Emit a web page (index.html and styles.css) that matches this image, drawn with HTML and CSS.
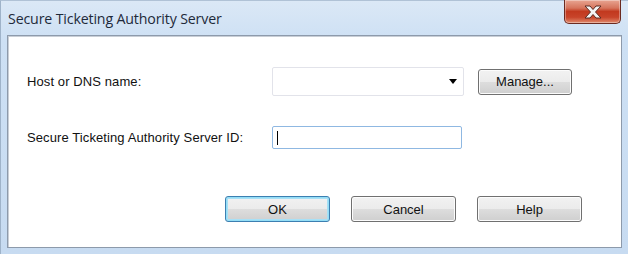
FILE: index.html
```html
<!DOCTYPE html>
<html>
<head>
<meta charset="utf-8">
<link rel="stylesheet" href="styles.css">
</head>
<body>
<div class="window">
  <div class="titlebar">
    <div class="title">Secure Ticketing Authority Server</div>
    <div class="close">
      <svg width="22" height="14" viewBox="0 0 22 14">
        <path d="M3 1 L8 1 L11 4.5 L14 1 L19 1 L13.5 7 L19 13 L14 13 L11 9.5 L8 13 L3 13 L8.5 7 Z" fill="#f4f4f4" stroke="#5a2a22" stroke-width="1" stroke-linejoin="round"/>
      </svg>
    </div>
  </div>
  <div class="panel">
    <div class="form">
      <div class="row row-host">
        <label class="label">Host or DNS name:</label>
        <div class="combo"><span class="arrow"></span></div>
        <button class="btn manage">Manage...</button>
      </div>
      <div class="row row-id">
        <label class="label">Secure Ticketing Authority Server ID:</label>
        <div class="textbox"><span class="caret"></span></div>
      </div>
    </div>
    <div class="actions">
      <button class="btn default">OK</button>
      <button class="btn">Cancel</button>
      <button class="btn">Help</button>
    </div>
  </div>
</div>
</body>
</html>
```
FILE: styles.css
```css
* { box-sizing: border-box; }
html, body { margin: 0; padding: 0; }
body { width: 628px; height: 254px; overflow: hidden; background: #cfe0f3; }

.window {
  width: 628px;
  height: 254px;
  background: linear-gradient(to bottom, #dbe8f6 0px, #cde0f4 40px, #c7dbf1 100%);
  border-left: 1px solid #9fb3c9;
  border-top: 1px solid #b0c2d6;
  display: flex;
  flex-direction: column;
}

.titlebar {
  height: 34px;
  display: flex;
  justify-content: space-between;
  align-items: flex-start;
  padding-left: 7px;
  padding-right: 7px;
}

.title {
  font-family: "Open Sans", "Noto Sans", sans-serif;
  font-size: 14.2px;
  color: #1e2a3a;
  margin-top: 8px;
  letter-spacing: -0.15px;
}

.close {
  width: 57px;
  height: 24px;
  margin-top: -1px;
  border: 1px solid #6b2a20;
  border-top: none;
  border-radius: 0 0 5px 5px;
  background: linear-gradient(to bottom, #e8a592 0%, #d6745c 35%, #c2391f 50%, #c8442a 75%, #e08a6c 100%);
  box-shadow: inset 0 0 0 1px rgba(255,255,255,0.35);
  display: flex;
  align-items: center;
  justify-content: center;
}

.panel {
  margin: 0 6px 6px 6px;
  flex: 1;
  background: #ffffff;
  border: 1px solid #8d9aab;
  box-shadow: inset 1px 1px 0 #c8ced6;
  display: flex;
  flex-direction: column;
  font-family: "Liberation Sans", Arial, sans-serif;
  font-size: 13px;
  color: #111;
}

.form {
  padding: 31px 0 0 19px;
  display: flex;
  flex-direction: column;
  gap: 30px;
}

.row {
  display: flex;
  align-items: center;
}

.label {
  width: 245px;
  letter-spacing: 0.1px;
}

.combo {
  width: 192px;
  height: 29px;
  border: 1px solid #e2e3ea;
  border-radius: 2px;
  display: flex;
  align-items: center;
  justify-content: flex-end;
  padding-right: 6px;
}

.arrow {
  width: 0;
  height: 0;
  border-left: 4.5px solid transparent;
  border-right: 4.5px solid transparent;
  border-top: 5px solid #000;
}

.textbox {
  width: 190px;
  height: 23px;
  border: 1px solid #8fb8e2;
  border-radius: 2px;
  display: flex;
  align-items: center;
  padding-left: 4px;
}

.caret {
  width: 1px;
  height: 14px;
  background: #000;
}

.actions {
  display: flex;
  gap: 21px;
  margin-top: 47px;
  padding-left: 217px;
}

.btn {
  font-family: "Liberation Sans", Arial, sans-serif;
  font-size: 13px;
  color: #111;
  width: 105px;
  height: 26px;
  border: 1px solid #707070;
  border-radius: 3px;
  background: linear-gradient(to bottom, #f2f2f2 0%, #ebebeb 50%, #dddddd 51%, #cfcfcf 100%);
  box-shadow: inset 0 0 0 1px #fcfcfc;
  padding: 0;
}

.btn.manage {
  margin-left: 14px;
  width: 94px;
  height: 26px;
}

.btn.default {
  border-color: #3c7fb1;
  box-shadow: inset 0 0 0 1px #48d8fb33, inset 0 0 0 2px #a8e0f6;
}
```
